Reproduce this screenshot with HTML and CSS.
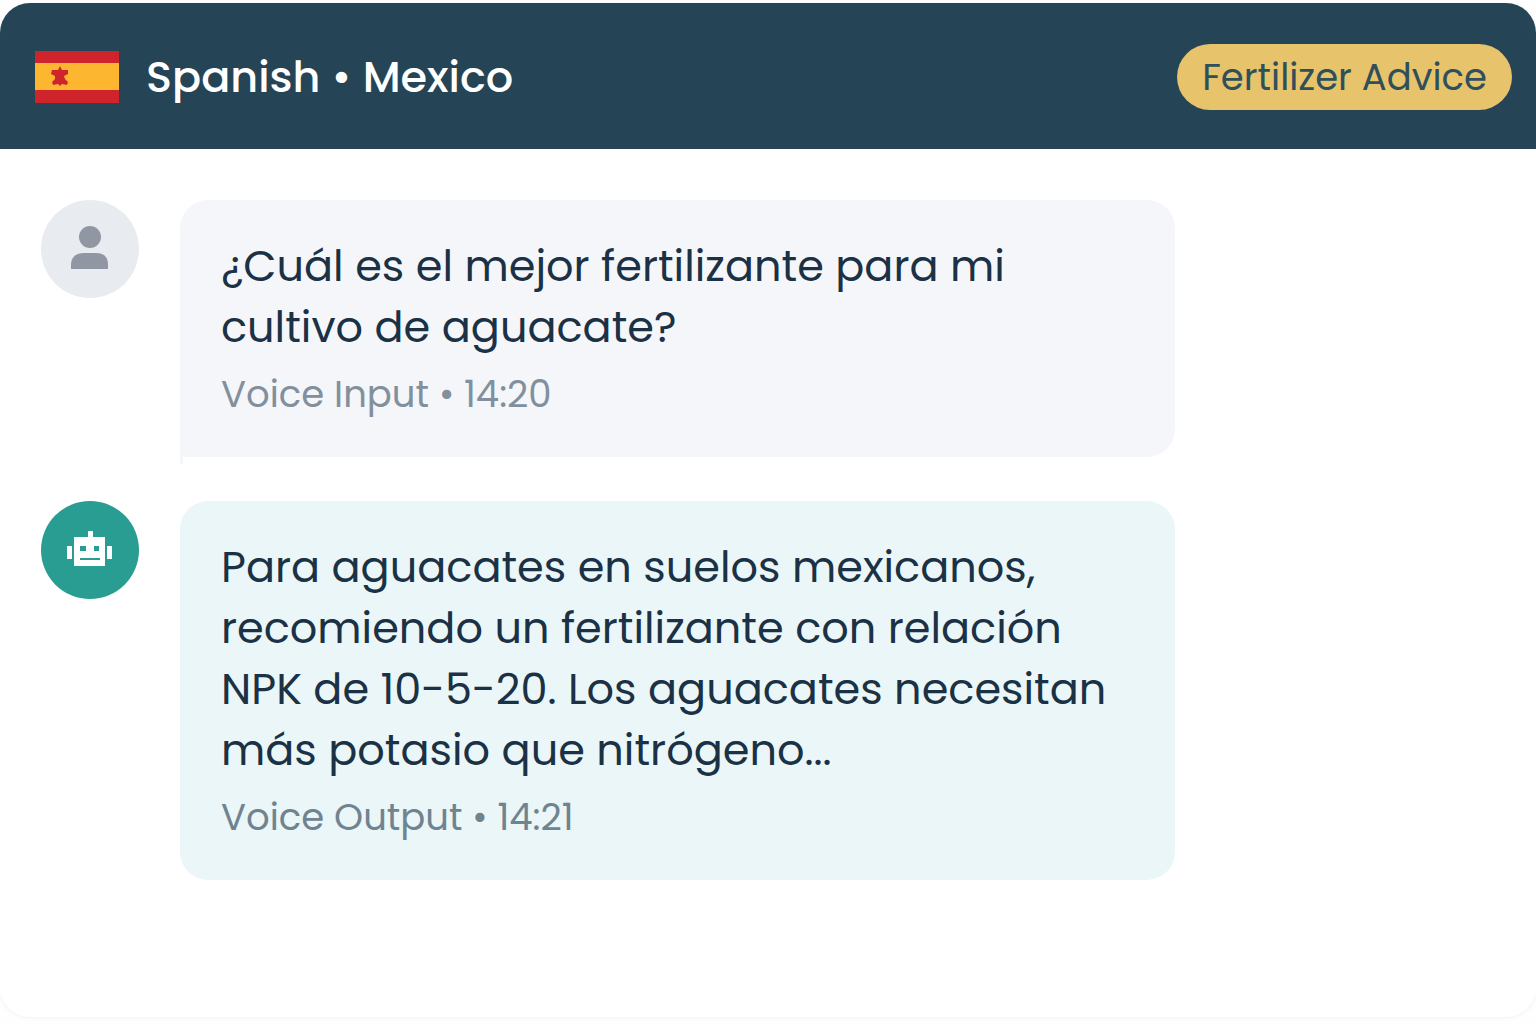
FILE: index.html
```html
<!DOCTYPE html>
<html lang="en">
<head>
    <meta charset="UTF-8">
    <meta name="viewport" content="width=device-width, initial-scale=1.0">
    <title>Spanish • Mexico</title>
    <link rel="stylesheet" href="styles.css">
</head>
<body>
    <main class="card">
        <header class="card-header">
            <svg class="flag" viewBox="0 0 84 52" aria-hidden="true">
                <rect width="84" height="52" fill="#cf242b"/>
                <rect y="12" width="84" height="27" fill="#fdb62f"/>
                <path d="M25 15L27 19L33 19L33 23L29 25L30 28L33 31L32 34L27 33L25 35L23 33L18 34L17 31L20 28L20 25L16 23L17 19L23 19Z" fill="#cf242b"/>
            </svg>
            <h1 class="language">Spanish • Mexico</h1>
            <span class="topic">Fertilizer Advice</span>
        </header>

        <section class="chat">
            <div class="message">
                <div class="avatar">
                    <svg viewBox="0 0 48 48" aria-hidden="true">
                        <circle cx="24" cy="12" r="11" fill="#9197a2"/>
                        <path d="M5 44V40C5 32 10 28 18 28H30C38 28 42 32 42 40V44Z" fill="#9197a2"/>
                    </svg>
                </div>
                <div class="bubble">
                    <p class="text" lang="es">¿Cuál es el mejor fertilizante para mi cultivo de aguacate?</p>
                    <p class="meta">Voice Input • 14:20</p>
                </div>
            </div>

            <div class="message bot">
                <div class="avatar">
                    <svg viewBox="0 0 48 48" aria-hidden="true">
                        <path d="M22 5h5v6h12v29H8V11h14z" fill="#fff"/>
                        <path d="M1 20h5v13H1zM41 20h5v13h-5z" fill="#fff"/>
                        <path d="M14 20h6v5h-6zM28 20h5v5h-5zM14 32h20v2H14z" fill="#299d91"/>
                    </svg>
                </div>
                <div class="bubble">
                    <p class="text" lang="es">Para aguacates en suelos mexicanos, recomiendo un fertilizante con relación NPK de 10-5-20. Los aguacates necesitan más potasio que nitrógeno...</p>
                    <p class="meta">Voice Output • 14:21</p>
                </div>
            </div>
        </section>
    </main>
</body>
</html>
```
FILE: styles.css
```css
*{
    margin: 0;
    padding: 0;
    box-sizing: border-box;
}

body{
    background-color: #fefefe;
    font-family: Poppins, Inter, "Liberation Sans", sans-serif;
    color: #1b3145;
    min-height: 100vh;
    padding: 3px 0 7px;
    display: flex;
}

.card{
    flex: 1;
    background-color: #fff;
    border-radius: 30px;
    box-shadow: 0 1px 4px rgba(0, 0, 0, 0.05);
    overflow: hidden;
}

.card-header{
    display: flex;
    align-items: center;
    background-color: #254557;
    min-height: 146px;
    padding: 2px 24px 0 35px;
}

.flag{
    width: 84px;
    height: 52px;
    margin-right: 27px;
}

.language{
    color: #fff;
    font-size: 43px;
    font-weight: 500;
}

.topic{
    margin-left: auto;
    padding: 0 25px;
    line-height: 66px;
    border-radius: 33px;
    background-color: #e7c36c;
    color: #2f505a;
    font-size: 37px;
}

.chat{
    display: flex;
    flex-direction: column;
    gap: 44px;
    padding: 51px 41px;
}

.message{
    display: flex;
    align-items: flex-start;
    gap: 41px;
}

.avatar{
    display: flex;
    justify-content: center;
    align-items: center;
    flex-shrink: 0;
    width: 98px;
    height: 98px;
    border-radius: 50%;
    background-color: #e8ebf0;
}

.avatar svg{
    width: 48px;
    height: 48px;
}

.bubble{
    position: relative;
    width: 995px;
    padding: 36px 41px 35px;
    border-radius: 28px 28px 28px 0;
    background-color: #f5f6fa;
}

/* small tail under the user bubble */
.bubble::after{
    content: "";
    position: absolute;
    left: 0;
    bottom: -7px;
    width: 3px;
    height: 7px;
    background-color: #f5f6fa;
}

.text{
    font-size: 43px;
    line-height: 61px;
}

.meta{
    margin-top: 8px;
    font-size: 37px;
    line-height: 56px;
    color: #82909d;
}

.bot .avatar{
    background-color: #299d91;
}

.bot .bubble{
    border-radius: 28px;
    background-color: #eaf6f7;
}

.bot .bubble::after{
    display: none;
}

.bot .meta{
    color: #6f8490;
}
```
